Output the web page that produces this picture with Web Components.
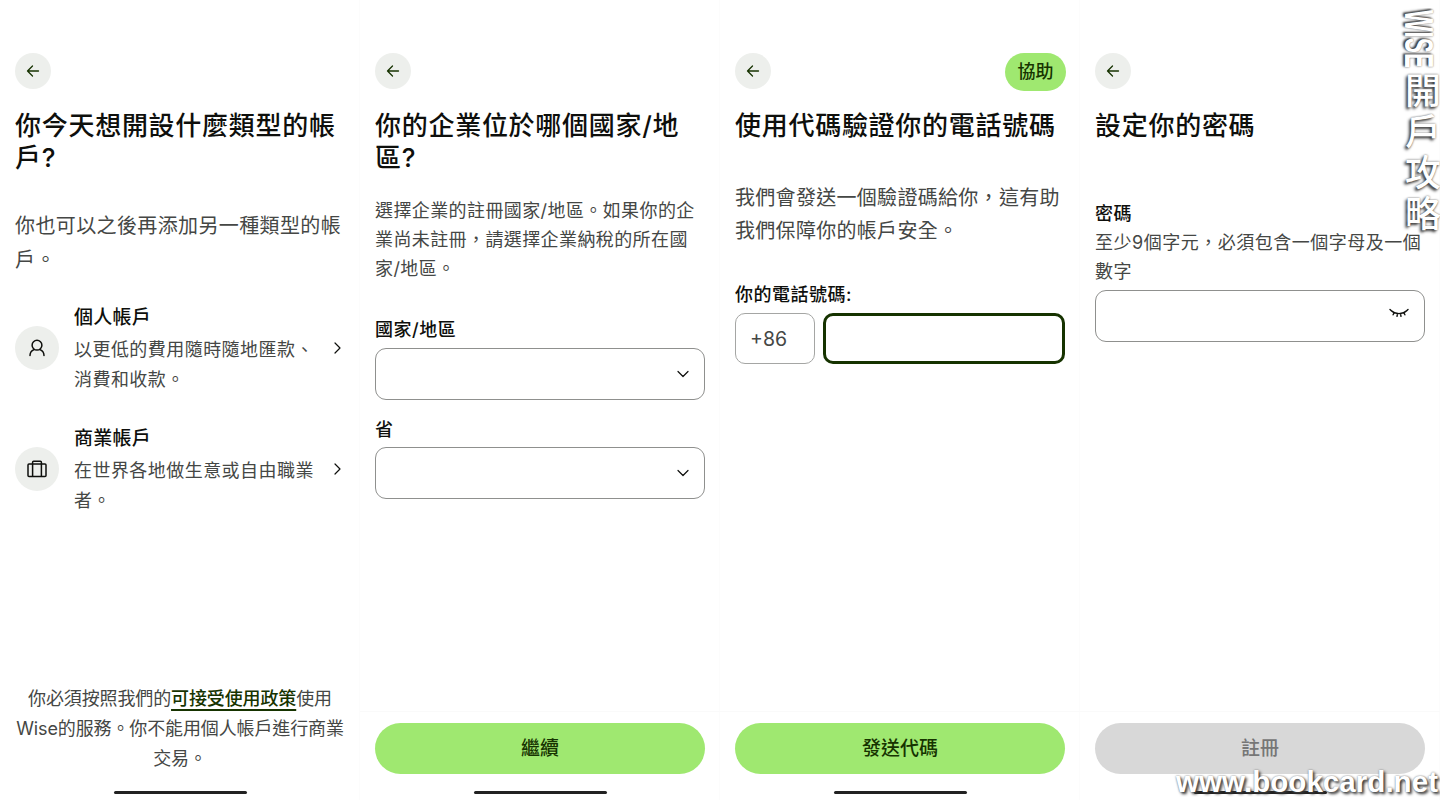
<!DOCTYPE html>
<html lang="zh-Hant">
<head>
<meta charset="utf-8">
<title>Wise</title>
<style>
  body {
    margin: 0;
    display: flex;
    width: 1440px;
    height: 800px;
    overflow: hidden;
    background: #fff;
    font-family: Inter, "Noto Sans CJK TC", sans-serif;
    color: #454745;
  }
  /* punctuation sits low-left in the reference */
  .p { font-family: "Noto Sans CJK SC", sans-serif; line-height: 0; }
  svg { display: block; }
</style>
</head>
<body>

<wise-screen>
  <wise-heading>你今天想開設什麼類型的帳戶?</wise-heading>
  <wise-text style="--fs:20px;--ls:.38px;--lh:34px;--mt:36px">你也可以之後再添加另一種類型的帳戶<span class="p">。</span></wise-text>
  <wise-option style="--mt:24px" title-text="個人帳戶">
    <svg slot="icon" width="18" height="18" viewBox="0 0 18 18" fill="none" stroke="#0e0f0c" stroke-width="1.5" stroke-linecap="round">
      <circle cx="9" cy="6.2" r="4.9"/>
      <path d="M2 16.6c0-3 1.6-5 4-6M16 16.6c0-3-1.6-5-4-6"/>
    </svg>
    以更低的費用隨時隨地匯款<span class="p">、</span>消費和收款<span class="p">。</span>
  </wise-option>
  <wise-option style="--mt:27px" title-text="商業帳戶">
    <svg slot="icon" width="20" height="18" viewBox="0 0 20 18" fill="none" stroke="#0e0f0c" stroke-width="1.5">
      <rect x="1" y="4" width="18" height="12.6" rx="1"/>
      <path d="M5.6 16.6V2.2a1 1 0 0 1 1-1h6.8a1 1 0 0 1 1 1v14.4"/>
    </svg>
    在世界各地做生意或自由職業者<span class="p">。</span>
  </wise-option>
  <wise-terms slot="footer">你必須按照我們的<a>可接受使用政策</a>使用Wise的服務<span class="p">。</span>你不能用個人帳戶進行商業交易<span class="p">。</span></wise-terms>
</wise-screen>

<wise-screen>
  <wise-heading>你的企業位於哪個國家/地區?</wise-heading>
  <wise-text style="--fs:18px;--ls:.4px;--lh:29px;--mt:22.5px">選擇企業的註冊國家/地區<span class="p">。</span>如果你的企業尚未註冊<span class="p">，</span>請選擇企業納稅的所在國家/地區<span class="p">。</span></wise-text>
  <wise-label style="--mt:31.5px;--mb:4px">國家/地區</wise-label>
  <wise-input><wise-chevron slot="icon"></wise-chevron></wise-input>
  <wise-label style="--mt:14px;--mb:3px">省</wise-label>
  <wise-input><wise-chevron slot="icon"></wise-chevron></wise-input>
  <wise-button slot="footer">繼續</wise-button>
</wise-screen>

<wise-screen>
  <help-pill slot="action">協助</help-pill>
  <wise-heading>使用代碼驗證你的電話號碼</wise-heading>
  <wise-text style="--fs:20px;--ls:.3px;--lh:33px;--mt:40.5px">我們會發送一個驗證碼給你<span class="p">，</span>這有助我們保障你的帳戶安全<span class="p">。</span></wise-text>
  <wise-label style="--mt:31.5px;--mb:4px">你的電話號碼:</wise-label>
  <phone-input code="+86"></phone-input>
  <wise-button slot="footer">發送代碼</wise-button>
</wise-screen>

<wise-screen>
  <wise-heading>設定你的密碼</wise-heading>
  <wise-label style="--mt:57px;--mb:0px">密碼</wise-label>
  <wise-text style="--fs:18px;--ls:.5px;--lh:29px;--mt:-.5px">至少9個字元<span class="p">，</span>必須包含一個字母及一個數字</wise-text>
  <wise-input style="--mt:4.5px">
    <svg slot="icon" width="20" height="11" viewBox="0 0 20 11" fill="none" stroke="#0e0f0c" stroke-width="1.4" stroke-linecap="round" style="margin-bottom:5px">
      <path d="M2 2.6c4.5 4 11.5 4 16 0M1 1.5l1.4 1.2M19 1.5l-1.4 1.2M5 5l-.9 1.8M8.4 6.2 8 8.4M11.6 6.2l.4 2.2M15 5l.9 1.8"/>
    </svg>
  </wise-input>
  <wise-button slot="footer" disabled>註冊</wise-button>
</wise-screen>

<wise-watermark></wise-watermark>

<script>
const screenTemplate = document.createElement("template");
screenTemplate.innerHTML = `
  <style>
    :host {
      display: flex;
      flex-direction: column;
      box-sizing: border-box;
      width: 360px;
      height: 800px;
      padding: 53px 15px 0;
      box-shadow: inset -1px 0 0 #fcfcfc;
    }
    .nav {
      display: flex;
      justify-content: space-between;
      align-items: flex-start;
      height: 36px;
    }
    .back {
      display: flex;
      align-items: center;
      justify-content: center;
      width: 36px;
      height: 36px;
      border-radius: 50%;
      background: #edefec;
    }
    .bottom {
      margin-top: auto;
      margin-left: -15px;
      margin-right: -15px;
    }
    .indicator {
      width: 133px;
      height: 3px;
      margin: 17px auto 6px;
      border-radius: 2px;
      background: #222;
    }
  </style>
  <div class="nav">
    <div class="back">
      <svg width="14" height="14" viewBox="0 0 14 14" fill="none" stroke="#163300" stroke-width="1.3" stroke-linecap="round" stroke-linejoin="round">
        <path d="M1.5 7h11M6.5 2 1.5 7l5 5"/>
      </svg>
    </div>
    <slot name="action"></slot>
  </div>
  <slot></slot>
  <div class="bottom">
    <slot name="footer"></slot>
    <div class="indicator"></div>
  </div>
`;
class WiseScreen extends HTMLElement {
  constructor() {
    super();
    this.attachShadow({ mode: "open" }).appendChild(screenTemplate.content.cloneNode(true));
  }
}

class WiseHeading extends HTMLElement {
  constructor() {
    super();
    this.attachShadow({ mode: "open" }).innerHTML = `
      <style>
        :host {
          display: block;
          margin-top: 21px;
          margin-bottom: -1px;
          font-size: 26px;
          font-weight: 500;
          line-height: 32px;
          letter-spacing: .72px;
          color: #0e0f0c;
        }
      </style>
      <slot></slot>
    `;
  }
}

class WiseText extends HTMLElement {
  constructor() {
    super();
    this.attachShadow({ mode: "open" }).innerHTML = `
      <style>
        :host {
          display: block;
          margin-top: var(--mt, 0);
          font-size: var(--fs, 18px);
          line-height: var(--lh, 30px);
          letter-spacing: var(--ls, 1px);
          color: #454745;
        }
      </style>
      <slot></slot>
    `;
  }
}

class WiseLabel extends HTMLElement {
  constructor() {
    super();
    this.attachShadow({ mode: "open" }).innerHTML = `
      <style>
        :host {
          display: block;
          margin-top: var(--mt, 0);
          margin-bottom: calc(var(--mb, 0px) - 1px);
          padding-top: 1px;
          font-size: 18px;
          font-weight: 500;
          line-height: 30px;
          letter-spacing: .5px;
          color: #0e0f0c;
        }
      </style>
      <slot></slot>
    `;
  }
}

class WiseOption extends HTMLElement {
  constructor() {
    super();
    this.attachShadow({ mode: "open" }).innerHTML = `
      <style>
        :host {
          display: grid;
          grid-template-columns: 44px minmax(0, 1fr) 7px;
          column-gap: 15px;
          align-items: center;
          margin-top: var(--mt, 0);
          padding-right: 4px;
        }
        .icon {
          display: flex;
          align-items: center;
          justify-content: center;
          width: 44px;
          height: 44px;
          border-radius: 50%;
          background: #edefec;
        }
        .title {
          padding-top: 2px;
          margin-bottom: 2px;
          font-size: 19px;
          font-weight: 500;
          line-height: 30px;
          letter-spacing: .25px;
          color: #0e0f0c;
        }
        .desc {
          font-size: 18px;
          line-height: 30px;
          letter-spacing: .45px;
          color: #454745;
          width: 250px;
        }
      </style>
      <div class="icon"><slot name="icon"></slot></div>
      <div>
        <div class="title">${this.getAttribute("title-text")}</div>
        <div class="desc"><slot></slot></div>
      </div>
      <svg width="7" height="12" viewBox="0 0 7 12" fill="none" stroke="#0e0f0c" stroke-width="1.2" stroke-linecap="round" stroke-linejoin="round">
        <path d="M1 1 6 6l-5 5"/>
      </svg>
    `;
  }
}

class WiseChevron extends HTMLElement {
  constructor() {
    super();
    this.attachShadow({ mode: "open" }).innerHTML = `
      <style>
        :host { display: block; }
        svg { display: block; }
      </style>
      <svg width="12" height="8" viewBox="0 0 12 8" fill="none" stroke="#0e0f0c" stroke-width="1.2" stroke-linecap="round" stroke-linejoin="round">
        <path d="M1 1.5 6 6.5l5-5"/>
      </svg>
    `;
  }
}

class WiseInput extends HTMLElement {
  constructor() {
    super();
    this.attachShadow({ mode: "open" }).innerHTML = `
      <style>
        :host {
          display: flex;
          align-items: center;
          justify-content: flex-end;
          box-sizing: border-box;
          height: 52px;
          margin-top: var(--mt, 0);
          padding-right: 15px;
          border: 1px solid #8f908e;
          border-radius: 11px;
          background: #fff;
        }
      </style>
      <slot name="icon"></slot>
    `;
  }
}

class PhoneInput extends HTMLElement {
  constructor() {
    super();
    this.attachShadow({ mode: "open" }).innerHTML = `
      <style>
        :host {
          display: flex;
          gap: 8px;
          height: 51px;
        }
        .code {
          box-sizing: border-box;
          width: 80px;
          padding-left: 14px;
          border: 1px solid #a5a6a4;
          border-radius: 10px;
          font-size: 19.5px;
          line-height: 50px;
          color: #454745;
        }
        .number {
          box-sizing: border-box;
          flex: 1;
          border: 3px solid #163300;
          border-radius: 10px;
        }
      </style>
      <div class="code">${this.getAttribute("code")}</div>
      <div class="number"></div>
    `;
  }
}

class HelpPill extends HTMLElement {
  constructor() {
    super();
    this.attachShadow({ mode: "open" }).innerHTML = `
      <style>
        :host {
          display: block;
          box-sizing: border-box;
          width: 61px;
          height: 38px;
          margin-right: -1px;
          border-radius: 19px;
          background: #9fe870;
          color: #163300;
          font-size: 18px;
          font-weight: 500;
          line-height: 37px;
          text-align: center;
        }
      </style>
      <slot></slot>
    `;
  }
}

class WiseButton extends HTMLElement {
  constructor() {
    super();
    this.attachShadow({ mode: "open" }).innerHTML = `
      <style>
        :host {
          display: block;
          padding: 12px 15px 0;
          box-shadow: inset 0 1px 0 #fafafa;
        }
        .btn {
          height: 51px;
          border-radius: 26px;
          background: #9fe870;
          color: #163300;
          font-size: 19px;
          font-weight: 500;
          line-height: 52px;
          text-align: center;
        }
        :host([disabled]) .btn {
          background: #d8d8d8;
          color: #767676;
        }
      </style>
      <div class="btn"><slot></slot></div>
    `;
  }
}

class WiseTerms extends HTMLElement {
  constructor() {
    super();
    this.attachShadow({ mode: "open" }).innerHTML = `
      <style>
        :host {
          display: block;
          box-sizing: border-box;
          padding: 0 15px;
          font-size: 18px;
          line-height: 30px;
          letter-spacing: -.12px;
          text-align: center;
          color: #454745;
        }
        ::slotted(a) {
          color: #163300;
          font-weight: 500;
          text-decoration: underline;
          text-decoration-thickness: 2px;
          text-underline-offset: 4px;
        }
      </style>
      <slot></slot>
    `;
  }
}

// watermark lies over the last screen, so it's the only absolute thing here
class WiseWatermark extends HTMLElement {
  constructor() {
    super();
    this.attachShadow({ mode: "open" }).innerHTML = `
      <style>
        :host {
          position: absolute;
          inset: 0;
          pointer-events: none;
          color: #fff;
          font-family: "Liberation Sans", "Noto Sans CJK TC", sans-serif;
        }
        .side {
          position: absolute;
          top: 10px;
          right: 3px;
          display: flex;
          flex-direction: column;
          align-items: center;
          text-shadow: -2px 2px 3px #333, 0 0 2px #666;
        }
        .latin {
          writing-mode: vertical-rl;
          font-size: 40px;
          line-height: 36px;
          font-weight: 700;
          transform: scaleY(.57);
          transform-origin: top;
          margin-bottom: -40px;
        }
        .cjk {
          writing-mode: vertical-rl;
          font-size: 36px;
          line-height: 36px;
          font-weight: 500;
          letter-spacing: 5px;
        }
        .url {
          position: absolute;
          right: 2px;
          bottom: 0;
          font-size: 29.6px;
          line-height: 36px;
          font-weight: 700;
          text-shadow: 2px 2px 3px #333, 0 0 2px #777;
        }
      </style>
      <div class="side"><div class="latin">WISE</div><div class="cjk">開戶攻略</div></div>
      <div class="url">www.bookcard.net</div>
    `;
  }
}

customElements.define("wise-screen", WiseScreen);
customElements.define("wise-heading", WiseHeading);
customElements.define("wise-text", WiseText);
customElements.define("wise-label", WiseLabel);
customElements.define("wise-option", WiseOption);
customElements.define("wise-chevron", WiseChevron);
customElements.define("wise-input", WiseInput);
customElements.define("phone-input", PhoneInput);
customElements.define("help-pill", HelpPill);
customElements.define("wise-button", WiseButton);
customElements.define("wise-terms", WiseTerms);
customElements.define("wise-watermark", WiseWatermark);
</script>
</body>
</html>
